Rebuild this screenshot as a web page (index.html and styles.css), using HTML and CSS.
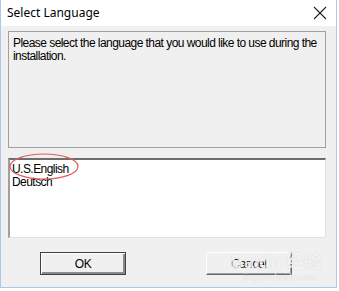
FILE: index.html
```html
<!DOCTYPE html>
<html lang="en">
<head>
    <meta charset="UTF-8">
    <title>Select Language</title>
    <link rel="stylesheet" href="styles.css">
</head>
<body>
    <div class="dialog">
        <div class="title-bar">
            <span class="title">Select Language</span>
            <svg class="close" width="14" height="14" viewBox="0 0 14 14">
                <path d="M1 1 L13 13 M13 1 L1 13" stroke="#222" stroke-width="1.1" fill="none"/>
            </svg>
        </div>
        <div class="dialog-body">
            <div class="message">
                Please select the language that you would like to use during the installation.
            </div>
            <div class="lang-list">
                <div class="lang-item">U.S.English</div>
                <div class="lang-item">Deutsch</div>
                <svg class="mark" width="72" height="28" viewBox="0 0 72 28">
                    <ellipse cx="35" cy="13.5" rx="34" ry="12.5" stroke="#e25a5a" stroke-width="1.2" fill="none"/>
                </svg>
            </div>
            <div class="buttons">
                <button class="btn btn-default">OK</button>
                <button class="btn">Cancel</button>
            </div>
            <div class="watermark">
                <span class="wm-logo">Bai<span class="paw">du</span> 经验</span>
                <span class="wm-url">jingyan.baidu.com</span>
            </div>
        </div>
    </div>
</body>
</html>
```
FILE: styles.css
```css
* {
    margin: 0;
    padding: 0;
    box-sizing: border-box;
}

body {
    background: #fff;
    width: 339px;
    height: 291px;
    font-family: "Liberation Sans", Arial, sans-serif;
}

.dialog {
    width: 337px;
    height: 288px;
    border: 1px solid #a9c8ea;
    border-top: none;
    display: flex;
    flex-direction: column;
    background: #f0f0f0;
}

.title-bar {
    height: 26px;
    background: #fff;
    display: flex;
    align-items: center;
    justify-content: space-between;
    padding: 0 9px 0 6px;
}

.title {
    font-family: "Noto Sans", "DejaVu Sans", sans-serif;
    font-size: 12px;
    color: #000;
    margin-top: -2px;
}

.close {
    margin-top: -1px;
}

.dialog-body {
    position: relative;
    flex: 1;
    padding: 5px 10px 0 7px;
    display: flex;
    flex-direction: column;
}

.message {
    height: 117px;
    border: 1px solid #a0a0a0;
    background: #f0f0f0;
    font-size: 12px;
    letter-spacing: -0.55px;
    line-height: 13px;
    color: #000;
    padding: 5px 1px 0 4px;
}

.lang-list {
    position: relative;
    margin-top: 10px;
    height: 80px;
    background: #fff;
    border-top: 2px solid #6d6d6d;
    border-left: 2px solid #a0a0a0;
    border-right: 1px solid #e3e3e3;
    border-bottom: 1px solid #e3e3e3;
    padding: 3px 0 0 2px;
    font-size: 12px;
    letter-spacing: -0.55px;
    line-height: 13px;
    color: #000;
}

.mark {
    position: absolute;
    left: -1px;
    top: -7px;
}

.buttons {
    display: flex;
    gap: 80px;
    margin-top: 14px;
    padding-left: 32px;
}

.btn {
    width: 86px;
    height: 23px;
    background: #f0f0f0;
    font-family: "Liberation Sans", Arial, sans-serif;
    font-size: 12px;
    letter-spacing: -0.3px;
    color: #000;
    border: 1px solid;
    border-color: #fff #696969 #696969 #fff;
    box-shadow: inset -1px -1px 0 #a0a0a0;
}

.btn-default {
    border: 1px solid #404040;
    box-shadow: inset 1px 1px 0 #fff, inset -2px -2px 0 #8a8a8a;
}

.watermark {
    position: absolute;
    right: 14px;
    bottom: 5px;
    display: flex;
    flex-direction: column;
    align-items: flex-end;
    color: rgba(255, 255, 255, 0.75);
    text-shadow: 0 0 1px rgba(150, 150, 150, 0.4);
    pointer-events: none;
}

.wm-logo {
    font-family: "Liberation Sans", "Noto Sans CJK SC", sans-serif;
    font-size: 18px;
    font-weight: bold;
    line-height: 19px;
}

.wm-url {
    font-size: 9px;
    line-height: 10px;
    margin-right: 6px;
}
```
